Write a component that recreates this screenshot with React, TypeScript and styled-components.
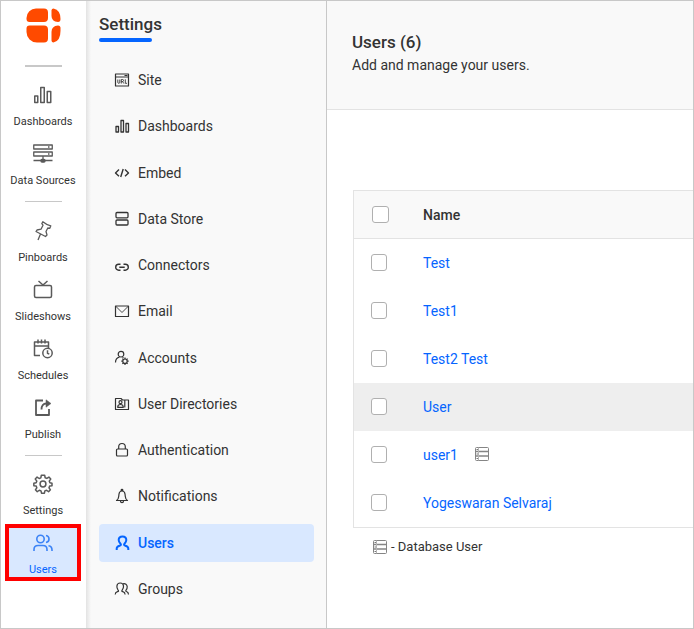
import React from "react";
import styled, { createGlobalStyle, css } from "styled-components";

const blue = "#0565ff";
const ink = "#333333";
const line = "#e3e3e3";

const GlobalStyle = createGlobalStyle`
  *, *::before, *::after { box-sizing: border-box; }
  body { margin: 0; background: #ffffff; color: ${ink}; font-family: Roboto, "Liberation Sans", sans-serif; font-size: 14px; }
  button { font: inherit; color: inherit; }
  h1, h2, p, ul { margin: 0; padding: 0; }
  ul { list-style: none; }
`;

const Shell = styled.div`
  display: flex;
  min-height: 100vh;
  border: 1px solid #c8c8c8;
`;

const Rail = styled.nav`
  display: flex;
  flex-direction: column;
  align-items: center;
  flex: none;
  width: 85px;
  padding: 7px 1px 0 0;
  background: #ffffff;
`;

const LogoLink = styled.a`
  display: block;
  height: 57px;
  svg { display: block; }
`;

const Separator = styled.hr<{ $weight?: number; $before: number; $after: number }>`
  width: 37px;
  height: ${(p) => p.$weight ?? 1}px;
  margin: ${(p) => p.$before}px 0 ${(p) => p.$after}px;
  border: 0;
  background: #c8c8c8;
`;

const RailButton = styled.button<{ $active?: boolean }>`
  display: flex;
  flex-direction: column;
  align-items: center;
  gap: 10px;
  width: 76px;
  height: 59px;
  padding: 10px 0 0;
  border: 0;
  background: none;
  font-size: 11px;
  line-height: 14px;
  white-space: nowrap;
  svg { flex: none; color: #5a5a5a; }
  ${(p) =>
    p.$active &&
    css`
      height: 57px;
      margin-top: 1px;
      padding-top: 5px;
      border: 4px solid #ff0000;
      background: #d9e8ff;
      color: ${blue};
      svg { color: #3c83f6; }
    `}
`;

const Panel = styled.aside`
  display: flex;
  flex-direction: column;
  flex: none;
  width: 241px;
  padding: 13px 12px 20px 13px;
  border-right: 1px solid #c8c8c8;
  background: linear-gradient(to right, #e3e3e3, #f9f9f9 5px);
`;

const PanelTitle = styled.h2`
  font-size: 17px;
  font-weight: 500;
  line-height: 20px;
  &::after {
    content: "";
    display: block;
    width: 53px;
    height: 4px;
    margin-top: 4px;
    border-radius: 2px;
    background: ${blue};
  }
`;

const Menu = styled.ul`
  display: flex;
  flex: 1;
  flex-direction: column;
  justify-content: space-between;
  padding-top: 19px;
`;

const MenuLink = styled.a<{ $active?: boolean }>`
  display: flex;
  align-items: center;
  gap: 8px;
  height: 38px;
  padding-left: 15px;
  border-radius: 4px;
  background: ${(p) => (p.$active ? "#d9e8ff" : "transparent")};
  color: ${(p) => (p.$active ? blue : ink)};
  font-size: 14px;
  font-weight: ${(p) => (p.$active ? 500 : 400)};
  line-height: 18px;
  text-decoration: none;
  svg { flex: none; }
`;

const Main = styled.main`
  flex: 1;
  min-width: 0;
`;

const PageHeader = styled.header`
  height: 109px;
  padding: 30px 25px 0;
  border-bottom: 1px solid ${line};
  background: #f9f9f9;
`;

const PageTitle = styled.h1`
  font-size: 17px;
  font-weight: 500;
  line-height: 23px;
`;

const PageText = styled.p`
  line-height: 22px;
`;

const Content = styled.section`
  padding: 80px 0 0 26px;
`;

const Table = styled.table`
  width: 100%;
  border: 1px solid ${line};
  border-right: 0;
  border-collapse: separate;
  border-spacing: 0;
`;

const HeadCell = styled.th`
  height: 48px;
  padding: 0;
  border-bottom: 1px solid ${line};
  background: #f9f9f9;
  font-weight: 500;
  text-align: left;
`;

const CheckHead = styled(HeadCell)`
  width: 69px;
  padding-left: 18px;
`;

const Row = styled.tr<{ $hover?: boolean }>`
  background: ${(p) => (p.$hover ? "#eeeeee" : "#ffffff")};
`;

const Cell = styled.td`
  height: 48px;
  padding: 0 0 1px;
`;

const CheckCell = styled(Cell)`
  padding-left: 17px;
`;

const Check = styled.input`
  appearance: none;
  display: block;
  width: 17px;
  height: 17px;
  margin: 0;
  border: 1px solid #b0b0b0;
  border-radius: 3px;
  background: #ffffff;
  &:checked { background: ${blue}; }
  td & { width: 16px; }
`;

const NameLine = styled.div`
  display: flex;
  align-items: center;
  gap: 16px;
`;

const NameLink = styled.a`
  color: ${blue};
  text-decoration: none;
`;

const Legend = styled.p`
  display: flex;
  align-items: center;
  gap: 4px;
  padding: 9px 0 0 19px;
  font-size: 13px;
  line-height: 20px;
`;

type IconProps = { size: number; box?: number; weight?: number; children: React.ReactNode };

const Icon = ({ size, box = 20, weight = 1.5, children }: IconProps) => (
  <svg width={size} height={size} viewBox={`0 0 ${box} ${box}`} fill="none" stroke="currentColor" strokeWidth={weight} strokeLinejoin="round" aria-hidden="true">
    {children}
  </svg>
);

const Logo = () => (
  <svg width="35" height="35" viewBox="0 0 35 35" fill="#ff4a00" role="img" aria-label="Home">
    <path d="M10 .5H18a4 4 0 0 1 4 4V10a4 4 0 0 1-4 4H3.500a3 3 0 0 1-3-3V10A9.500 9.500 0 0 1 10 .5Z" />
    <path d="M27.500 .5q7 1.500 7 10.500 0 3-2.500 3-6.500-.5-6.500-6V2.500q0-2 2-2Z" />
    <path d="M3.500 17.500H18a4 4 0 0 1 4 4V30.500a4 4 0 0 1-4 4H11A10.500 10.500 0 0 1 .5 24V20.500a3 3 0 0 1 3-3Z" />
    <path d="M32 17.500q2.500 0 2.500 2.500V23q0 10-7 11.500-2 0-2-2V24q0-6 6.500-6.500Z" />
  </svg>
);

const railIcons = {
  dashboards: (
    <Icon size={20}><path d="M1.750 11h3v6.500h-3zM7.750 2.500h3.500v15h-3.500zM14.250 6.500h3.500v11h-3.500z" /></Icon>
  ),
  sources: (
    <Icon size={20} weight={1.300}><path d="M.75 1h18.500v4H.75zM.75 8h18.500v4H.75zM10 12v4M.5 16.500h19M15 3h1.500M15 10h1.500" /><rect x="8" y="15.500" width="4" height="2.500" rx="1" fill="currentColor" /></Icon>
  ),
  pin: (
    <Icon size={20} weight={1.300}><path d="M9.800 .8q3.500 3 8 4l-1 2.500-2-.3-1.800 3.500 1 3.500-1.500 1.500L3 10.500l1-1.500 4-.8 2-4-1.200-1.500ZM7.500 13l-2.500 6" /></Icon>
  ),
  slides: (
    <Icon size={20}><rect x="1.500" y="5.500" width="17" height="12" rx="1.500" /><path d="m5.500 1 4.500 4 4.500-4" /></Icon>
  ),
  schedules: (
    <Icon size={20}><path d="M7 16.500H1.500V3h14v6M1.500 7h14M5 .5v4M8.500.5v4M12 .5v4" /><circle cx="14.500" cy="14" r="4.700" /><path d="M14.500 11.300v3l1.800.8" /></Icon>
  ),
  publish: (
    <Icon size={20} weight={1.800}><path d="M10 2.500H3V17h13v-6" /><path d="M8.500 11.500q0-6 5-6" /><path d="m13 1.800 5 3.700-5 3.700Z" fill="currentColor" strokeWidth={0.5} /></Icon>
  ),
  settings: (
    <Icon size={20} box={24} weight={1.800}><circle cx="12" cy="12" r="3.500" /><path d="M10 1.500h4l.6 3 2 .8L19.100 3.700 21.300 6l-1.800 2.500.8 2 2.500.5v3l-2.800.5-.8 2 1.700 2.500-2.200 2.200-2.500-1.700-2 .8-.5 2.700h-3.500l-.6-2.700-2-.8-2.500 1.700-2.200-2.200 1.700-2.500-.8-2-2.800-.5v-3l2.800-.5.8-2L2.700 6l2.200-2.300 2.500 1.700 2-.8Z" /></Icon>
  ),
  users: (
    <Icon size={20} weight={1.600}><circle cx="7.500" cy="6" r="3.700" /><path d="M1 18v-1.500q0-4 4-4h5q4 0 4 4V18M13 2.500q3 .5 3 3.500t-3 3.500M15.500 12.700q3.500.5 3.500 4.300V18" /></Icon>
  ),
};

const menuIcons = {
  site: (
    <Icon size={16} box={16} weight={1.200}><path d="M1.500 2h13v12h-13zM1.500 5h13M10.500 3.500h3" /><path d="M3.800 7.500v2.800q0 1 1 1t1-1V7.500M7.300 11.500v-4h1.400q.8 0 .8 1t-.8 1H7.500M8.500 9.500l1.300 2M11.300 7.300v4h1.700" strokeWidth={0.9} /></Icon>
  ),
  dashboards: (
    <Icon size={16} box={16} weight={1.300}><path d="M2 8.500h2.500V14H2zM7 2.500h2.500V14H7zM12 5.500h2.500V14H12z" /></Icon>
  ),
  embed: (
    <Icon size={16} box={16} weight={1.400}><path d="M5 4.500 1.500 8 5 11.300M11 4.500 14.500 8 11 11.300M9.200 4l-2.500 8" /></Icon>
  ),
  store: (
    <Icon size={16} box={16} weight={1.300}><rect x="2" y="1.500" width="12" height="5.300" rx="1" /><rect x="2" y="9" width="12" height="5" rx="1" /></Icon>
  ),
  connectors: (
    <Icon size={16} box={16} weight={1.400}><path d="M6.500 7.200H4.700a3 3 0 0 0 0 6h1.800M9.500 7.200h1.800a3 3 0 0 1 0 6H9.500M5.300 10.200h5.400" /></Icon>
  ),
  email: (
    <Icon size={16} box={16} weight={1.200}><path d="M1.500 3h13v10.500h-13z" /><path d="M1.500 3 8 9.500 14.500 3" strokeWidth={0.9} /></Icon>
  ),
  accounts: (
    <Icon size={16} box={16} weight={1.200}><circle cx="7" cy="4.200" r="2.800" /><path d="M1.500 12.500q0-4.500 4-5.300M8.500 7.200l1 .5" /><circle cx="11" cy="11.200" r="2.200" /><path d="M11 7.500V9M11 13.400v1.500M7.300 11.200h1.500M13.200 11.200h1.500M8.400 8.600l1 1M12.600 12.800l1 1M8.400 13.800l1-1M12.600 9.600l1-1" /></Icon>
  ),
  directories: (
    <Icon size={16} box={16} weight={1.200}><path d="M1.500 13.500V2.500H7L8.500 4h6v9.500Z" /><circle cx="6.500" cy="6.200" r="1.500" /><path d="M3.700 11.300q0-2.800 2.800-2.800t2.800 2.800ZM10.800 4v7.500" /></Icon>
  ),
  lock: (
    <Icon size={16} box={16} weight={1.200}><rect x="2.500" y="7" width="11" height="7" rx="1" /><path d="M4.700 7V4.800a3.300 3.300 0 0 1 6.600 0V7" /></Icon>
  ),
  bell: (
    <Icon size={16} box={16} weight={1.200}><path d="M2.500 12.500q2-1.200 2.200-4l.3-2.500q.4-3 3-3t3 3l.3 2.500q.2 2.800 2.200 4ZM6.500 13q0 1.700 1.500 1.700T9.500 13M7.200 3V2q0-.7.800-.7t.8.7v1" /></Icon>
  ),
  user: (
    <Icon size={16} box={16} weight={2}><path d="M2.700 15v-1.500q0-2 3-2.800 2-.5.8-2Q4.700 6.800 4.700 5q0-3.500 3.800-3.500T12.300 5q0 1.800-1.800 3.700-1.200 1.500.8 2 3 .8 3 2.800V15" /></Icon>
  ),
  groups: (
    <Icon size={16} box={16} weight={1.200}><path d="M1.200 13.500q0-2.200 2.300-2.800 1.800-.4.500-1.900Q2.700 7.200 2.900 5q.3-3 3.300-3t3.300 3q.2 2.200-1.200 3.800-1.200 1.500.5 1.900 2.300.6 2.300 2.800M9 2.800q3.800-.6 4.200 2.800.1 2-1 3.300-.9 1.100.3 1.600 2 .7 2 3" /></Icon>
  ),
};

const DatabaseIcon = () => (
  <svg width="15" height="15" viewBox="0 0 15 15" fill="none" stroke="#858585" strokeWidth="1" role="img" aria-label="Database user">
    <rect x="1.500" y=".5" width="13" height="13" rx="1" />
    <path d="M1.500 4.500h13M1.500 9h13" strokeWidth="1.300" />
    <path d="M4.500 .5v13" stroke="#b5b5b5" />
    <path d="M2.500 2.500h1.500M2.500 7h1.500M2.500 11.500h1.500" stroke="#777777" />
  </svg>
);

const RailItem = ({ icon, label, active }: { icon: keyof typeof railIcons; label: string; active?: boolean }) => (
  <RailButton type="button" $active={active} aria-current={active ? "page" : undefined}>
    {railIcons[icon]}
    {label}
  </RailButton>
);

const menu: { icon: keyof typeof menuIcons; label: string; active?: boolean }[] = [
  { icon: "site", label: "Site" },
  { icon: "dashboards", label: "Dashboards" },
  { icon: "embed", label: "Embed" },
  { icon: "store", label: "Data Store" },
  { icon: "connectors", label: "Connectors" },
  { icon: "email", label: "Email" },
  { icon: "accounts", label: "Accounts" },
  { icon: "directories", label: "User Directories" },
  { icon: "lock", label: "Authentication" },
  { icon: "bell", label: "Notifications" },
  { icon: "user", label: "Users", active: true },
  { icon: "groups", label: "Groups" },
];

const users: { name: string; hover?: boolean; database?: boolean }[] = [
  { name: "Test" },
  { name: "Test1" },
  { name: "Test2 Test" },
  { name: "User", hover: true },
  { name: "user1", database: true },
  { name: "Yogeswaran Selvaraj" },
];

export default function App() {
  return (
    <>
      <GlobalStyle />
      <Shell>
        <Rail aria-label="Main">
          <LogoLink href="#"><Logo /></LogoLink>
          <Separator $weight={2} $before={0} $after={8} />
          <RailItem icon="dashboards" label="Dashboards" />
          <RailItem icon="sources" label="Data Sources" />
          <Separator $before={8} $after={9} />
          <RailItem icon="pin" label="Pinboards" />
          <RailItem icon="slides" label="Slideshows" />
          <RailItem icon="schedules" label="Schedules" />
          <RailItem icon="publish" label="Publish" />
          <Separator $before={8} $after={8} />
          <RailItem icon="settings" label="Settings" />
          <RailItem icon="users" label="Users" active />
        </Rail>
        <Panel>
          <PanelTitle>Settings</PanelTitle>
          <Menu>
            {menu.map((item) => (
              <li key={item.label}>
                <MenuLink href="#" $active={item.active}>
                  {menuIcons[item.icon]}
                  {item.label}
                </MenuLink>
              </li>
            ))}
          </Menu>
        </Panel>
        <Main>
          <PageHeader>
            <PageTitle>Users (6)</PageTitle>
            <PageText>Add and manage your users.</PageText>
          </PageHeader>
          <Content>
            <Table>
              <thead>
                <tr>
                  <CheckHead><Check type="checkbox" aria-label="Select all users" /></CheckHead>
                  <HeadCell scope="col">Name</HeadCell>
                </tr>
              </thead>
              <tbody>
                {users.map((user) => (
                  <Row key={user.name} $hover={user.hover}>
                    <CheckCell><Check type="checkbox" aria-label={`Select ${user.name}`} /></CheckCell>
                    <Cell>
                      <NameLine>
                        <NameLink href="#">{user.name}</NameLink>
                        {user.database && <DatabaseIcon />}
                      </NameLine>
                    </Cell>
                  </Row>
                ))}
              </tbody>
            </Table>
            <Legend><DatabaseIcon />- Database User</Legend>
          </Content>
        </Main>
      </Shell>
    </>
  );
}
